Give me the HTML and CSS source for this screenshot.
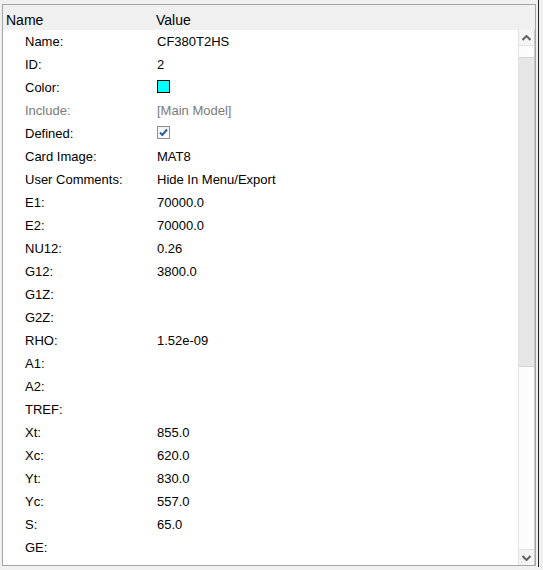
FILE: index.html
```html
<!DOCTYPE html>
<html>
<head>
<meta charset="utf-8">
<link rel="stylesheet" href="styles.css">
</head>
<body>
<div class="frame">
  <div class="panel">
    <div class="header">
      <div class="hcol hname">Name</div>
      <div class="hcol">Value</div>
    </div>
    <div class="body">
      <div class="rows">
        <div class="row"><span class="lbl">Name:</span><span class="val">CF380T2HS</span></div>
        <div class="row"><span class="lbl">ID:</span><span class="val">2</span></div>
        <div class="row"><span class="lbl">Color:</span><span class="val"><span class="swatch"></span></span></div>
        <div class="row dim"><span class="lbl">Include:</span><span class="val">[Main Model]</span></div>
        <div class="row"><span class="lbl">Defined:</span><span class="val"><span class="check"><svg width="11" height="11" viewBox="0 0 11 11"><path d="M2 5.5 L4.3 8 L9 2.5" fill="none" stroke="#2c5f9e" stroke-width="2"/></svg></span></span></div>
        <div class="row"><span class="lbl">Card Image:</span><span class="val">MAT8</span></div>
        <div class="row"><span class="lbl">User Comments:</span><span class="val">Hide In Menu/Export</span></div>
        <div class="row"><span class="lbl">E1:</span><span class="val">70000.0</span></div>
        <div class="row"><span class="lbl">E2:</span><span class="val">70000.0</span></div>
        <div class="row"><span class="lbl">NU12:</span><span class="val">0.26</span></div>
        <div class="row"><span class="lbl">G12:</span><span class="val">3800.0</span></div>
        <div class="row"><span class="lbl">G1Z:</span><span class="val"></span></div>
        <div class="row"><span class="lbl">G2Z:</span><span class="val"></span></div>
        <div class="row"><span class="lbl">RHO:</span><span class="val">1.52e-09</span></div>
        <div class="row"><span class="lbl">A1:</span><span class="val"></span></div>
        <div class="row"><span class="lbl">A2:</span><span class="val"></span></div>
        <div class="row"><span class="lbl">TREF:</span><span class="val"></span></div>
        <div class="row"><span class="lbl">Xt:</span><span class="val">855.0</span></div>
        <div class="row"><span class="lbl">Xc:</span><span class="val">620.0</span></div>
        <div class="row"><span class="lbl">Yt:</span><span class="val">830.0</span></div>
        <div class="row"><span class="lbl">Yc:</span><span class="val">557.0</span></div>
        <div class="row"><span class="lbl">S:</span><span class="val">65.0</span></div>
        <div class="row"><span class="lbl">GE:</span><span class="val"></span></div>
      </div>
      <div class="scrollbar">
        <div class="sbtn"><svg width="9" height="6" viewBox="0 0 9 6"><path d="M0.5 5 L4.5 1 L8.5 5" fill="none" stroke="#606060" stroke-width="2"/></svg></div>
        <div class="track-top"></div>
        <div class="thumb"></div>
        <div class="track-bottom"></div>
        <div class="sbtn"><svg width="9" height="6" viewBox="0 0 9 6"><path d="M0.5 1 L4.5 5 L8.5 1" fill="none" stroke="#606060" stroke-width="2"/></svg></div>
      </div>
    </div>
  </div>
  <div class="edge"></div>
</div>
</body>
</html>
```
FILE: styles.css
```css
html, body {
  margin: 0;
  padding: 0;
  background: #f0f0f0;
}
body {
  font-family: "Liberation Sans", Arial, sans-serif;
  color: #000;
  width: 543px;
  height: 570px;
  overflow: hidden;
}
.frame {
  display: flex;
  height: 570px;
}
.panel {
  margin-left: 2px;
  margin-top: 4px;
  width: 534px;
  height: 562px;
  box-sizing: border-box;
  border: 1px solid #a5a5a5;
  display: flex;
  flex-direction: column;
  background: #fff;
}
.header {
  height: 25px;
  flex: none;
  box-sizing: border-box;
  background: #f0f0f0;
  display: flex;
  padding-left: 3px;
  padding-top: 7px;
  font-size: 14px;
  line-height: 16px;
}
.hname {
  width: 150px;
}
.body {
  flex: 1;
  display: flex;
  min-height: 0;
}
.rows {
  flex: 1;
}
.row {
  display: grid;
  grid-template-columns: 132px 1fr;
  padding-left: 22px;
  height: 23px;
  line-height: 23px;
  font-size: 13px;
}
.row.dim {
  color: #7a7a7a;
}
.val {
  display: flex;
  align-items: center;
}
.swatch {
  width: 11px;
  height: 11px;
  border: 1px solid #000;
  background: #00ffff;
  margin-top: -2px;
}
.check {
  width: 11px;
  height: 11px;
  border: 1px solid #8f8f8f;
  background: linear-gradient(#f4f4f4, #ffffff);
  display: flex;
  align-items: center;
  justify-content: center;
  margin-top: -2px;
}
.scrollbar {
  width: 15px;
  flex: none;
  display: flex;
  flex-direction: column;
  border-left: 1px solid #e3e3e3;
  border-right: 1px solid #c8c8c8;
  background: #fbfbfb;
}
.sbtn {
  height: 16px;
  flex: none;
  display: flex;
  align-items: center;
  justify-content: center;
  background: #f4f4f4;
  border-bottom: 1px solid #e2e2e2;
  box-sizing: border-box;
}
.sbtn:last-child {
  border-bottom: none;
  border-top: 1px solid #e2e2e2;
}
.track-top {
  height: 11px;
  flex: none;
  background: #fcfcfc;
}
.thumb {
  height: 310px;
  flex: none;
  background: #e6e6e6;
  border-top: 1px solid #d6d6d6;
  border-bottom: 1px solid #d6d6d6;
  box-sizing: border-box;
}
.track-bottom {
  flex: 1;
  background: #fcfcfc;
}
.edge {
  margin-left: 2px;
  width: 1px;
  height: 567px;
  background: #222;
}
```
